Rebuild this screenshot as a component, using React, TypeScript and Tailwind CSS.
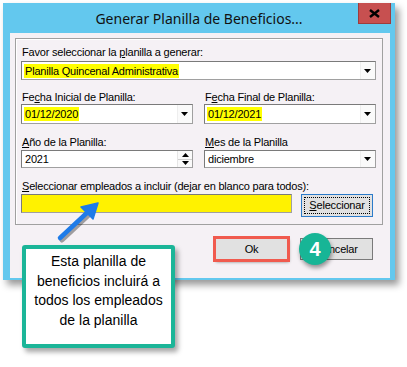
import React from 'react';

const Arrow = () => (
    <svg width="8" height="4" viewBox="0 0 8 4"><path d="M0 0h7L3.5 4z" fill="#000" /></svg>
);

const Combo: React.FC<{ value: string; highlight?: boolean; w: string; h: string }> = ({ value, highlight, w, h }) => (
    <div className={`${w} ${h} flex items-stretch bg-white border border-[#A0A0A0] border-t-[#7A7A7A] border-l-[#7A7A7A]`}>
        <div className="flex-1 flex items-center pl-[2px]">
            <span className={`leading-[14px] px-[1px] ${highlight ? 'bg-[#FFFF00]' : ''}`}>{value}</span>
        </div>
        <div className="w-[15px] flex items-center justify-center bg-[#FAFAFA] border-l border-[#EEEEEE]">
            <Arrow />
        </div>
    </div>
);

const Label: React.FC<{ pre?: string; u: string; post: string; mt: string }> = ({ pre, u, post, mt }) => (
    <div className={`${mt} h-[14px] leading-[14px] pl-[1px] whitespace-nowrap`}>
        {pre}<span className="underline underline-offset-[1px]">{u}</span>{post}
    </div>
);

export default function App() {
    return (
        <div className="relative w-[407px] h-[367px] bg-white overflow-hidden pt-[3px] pl-[3px]">
            <div className="w-[392px] h-[277px] flex flex-col bg-[#63C8EE] shadow-[4px_5px_7px_rgba(0,0,0,0.4)]">
                {/* title bar */}
                <div className="h-[30px] flex items-start">
                    <div className="w-[37px]" />
                    <div className="flex-1 h-full flex items-center justify-center text-[14px] text-[#111] pt-[1px]" style={{ fontFamily: '"Noto Sans", sans-serif' }}>
                        Generar Planilla de Beneficios...
                    </div>
                    <div className="w-[33px] h-[21px] mr-[4px] bg-[#C75050] border border-[#9E3C3C] border-t-0 flex items-center justify-center">
                        <svg width="11" height="9" viewBox="0 0 11 9"><path d="M1 1l9 7M10 1L1 8" stroke="#000" strokeWidth="2.4" /></svg>
                    </div>
                </div>

                {/* client area */}
                <div className="ml-[7px] mr-[5px] h-[245px] bg-[#F5F1F5] text-[11px] tracking-[-0.2px] text-black" style={{ fontFamily: '"Liberation Sans", Arial, sans-serif' }}>
                    <div className="ml-[5px] mt-[5px] w-[368px] h-[187px] border border-[#A0A0A0] shadow-[inset_1px_1px_0_#fff] pl-[5px] flex flex-col">
                        <Label mt="mt-[6px]" pre="Favor seleccionar la " u="p" post="lanilla a generar:" />
                        <div className="mt-[2px]">
                            <Combo value="Planilla Quincenal Administrativa" highlight w="w-[355px]" h="h-[19px]" />
                        </div>

                        <div className="flex gap-[11px] mt-[10px]">
                            <div className="w-[172px]">
                                <Label mt="mt-0" pre="Fe" u="c" post="ha Inicial de Planilla:" />
                                <Combo value="01/12/2020" highlight w="w-[172px]" h="h-[20px]" />
                            </div>
                            <div className="w-[172px]">
                                <Label mt="mt-0" pre="F" u="e" post="cha Final de Planilla:" />
                                <Combo value="01/12/2021" highlight w="w-[172px]" h="h-[20px]" />
                            </div>
                        </div>

                        <div className="flex gap-[11px] mt-[11px]">
                            <div className="w-[172px]">
                                <Label mt="mt-0" u="A" post="ño de la Planilla:" />
                                <div className="mt-[1px] w-[172px] h-[18px] flex items-stretch bg-white border border-[#A0A0A0] border-t-[#7A7A7A] border-l-[#7A7A7A]">
                                    <div className="flex-1 flex items-center pl-[3px]">2021</div>
                                    <div className="w-[15px] flex flex-col bg-[#FAFAFA] border-l border-[#E6E6E6]">
                                        <div className="flex-1 flex items-center justify-center border-b border-[#D0D0D0]">
                                            <svg width="7" height="4" viewBox="0 0 7 4"><path d="M0 4h7L3.5 0z" fill="#000" /></svg>
                                        </div>
                                        <div className="flex-1 flex items-center justify-center">
                                            <svg width="7" height="4" viewBox="0 0 7 4"><path d="M0 0h7L3.5 4z" fill="#000" /></svg>
                                        </div>
                                    </div>
                                </div>
                            </div>
                            <div className="w-[172px]">
                                <Label mt="mt-0" u="M" post="es de la Planilla" />
                                <div className="mt-[1px]">
                                    <Combo value="diciembre" w="w-[172px]" h="h-[18px]" />
                                </div>
                            </div>
                        </div>

                        <Label mt="mt-[11px]" u="S" post="eleccionar empleados a incluir (dejar en blanco para todos):" />
                        <div className="mt-[1px] flex items-start gap-[9px]">
                            <div className="w-[271px] h-[19px] bg-[#FFF200] border border-[#A0A0A0] border-t-[#7A7A7A] border-l-[#7A7A7A]" />
                            <div className="w-[72px] h-[23px] bg-[#E1E1E1] border border-[#2B7BC9] p-[2px]">
                                <div className="h-full border border-dotted border-black flex items-center justify-center">
                                    <span><span className="underline underline-offset-[1px]">S</span>eleccionar</span>
                                </div>
                            </div>
                        </div>
                    </div>

                    {/* bottom buttons */}
                    <div className="mt-[13px] flex justify-end gap-[12px] pr-[17px]">
                        <div className="w-[73px] h-[22px] bg-[#E1E1E1] border border-[#ADADAD] flex items-center justify-center outline-3 outline-solid outline-[#F05A4E] -outline-offset-1 shadow-[1px_2px_3px_rgba(0,0,0,0.45)]">
                            Ok
                        </div>
                        <div className="w-[73px] h-[22px] bg-[#E1E1E1] border border-[#7A7A7A] flex items-center justify-center">
                            Cancelar
                        </div>
                    </div>
                </div>
            </div>

            {/* annotation: blue arrow */}
            <svg className="absolute left-[50px] top-[196px]" width="56" height="50" viewBox="0 0 56 50">
                <path d="M10 42L40 14" stroke="rgba(0,0,0,0.35)" strokeWidth="5" strokeLinecap="round" transform="translate(2 2)" />
                <path d="M10 42L40 14" stroke="#1E7BE8" strokeWidth="4.5" strokeLinecap="round" />
                <path d="M48 7L31 11L43 23Z" fill="#1E7BE8" stroke="#1E7BE8" strokeWidth="1.5" strokeLinejoin="round" />
            </svg>

            {/* annotation: callout */}
            <div className="absolute left-[22px] top-[245px] w-[153px] h-[103px] bg-white border-4 border-[#1BB598] rounded-[3px] shadow-[3px_4px_5px_rgba(0,0,0,0.35)] pt-[3px] text-center text-[14px] leading-[19.6px] text-black" style={{ fontFamily: '"Liberation Sans", Arial, sans-serif' }}>
                Esta planilla de<br />beneficios incluirá a<br />todos los empleados<br />de la planilla
            </div>

            {/* annotation: step badge */}
            <div className="absolute left-[299px] top-[233px] w-[32px] h-[32px] rounded-full bg-[#17B596] shadow-[1px_3px_4px_rgba(0,0,0,0.4)] flex items-center justify-center text-white text-[20px] font-bold" style={{ fontFamily: '"Liberation Sans", Arial, sans-serif' }}>
                4
            </div>
        </div>
    );
}
